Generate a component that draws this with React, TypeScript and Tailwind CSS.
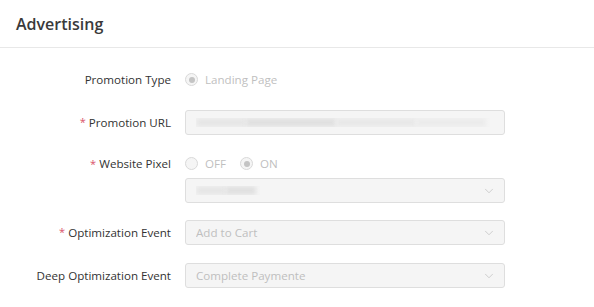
import { ChevronDown } from "lucide-react";

const Label = ({ text, required }: { text: string; required?: boolean }) => (
  <div className="w-[171px] shrink-0 h-[24px] flex items-center justify-end text-[11.6px] text-[#333]">
    {required && <span className="text-[#d9536b] mr-[3px] text-[11px]">*</span>}
    {text}
  </div>
);

const Radio = ({ label, checked }: { label: string; checked?: boolean }) => (
  <span className="flex items-center mr-[14px]">
    <span className="w-[13px] h-[13px] rounded-full border border-[#d9d9d9] bg-[#f5f5f5] flex items-center justify-center mr-[7px]">
      {checked && <span className="w-[6px] h-[6px] rounded-full bg-[#c4c4c4]" />}
    </span>
    <span className="text-[11.6px] text-[#bfbfbf]">{label}</span>
  </span>
);

const Blur = ({ w, shade }: { w: number; shade: string }) => (
  <span className={`h-[9px] blur-[2px] ${shade}`} style={{ width: w }} />
);

const Box = ({ children, select }: { children?: React.ReactNode; select?: boolean }) => (
  <div className="w-[320px] h-[25px] rounded-[3px] border border-[#dedede] bg-[#f5f5f5] flex items-center px-[10px] text-[11.6px] text-[#bfbfbf]">
    <div className="flex-1 flex items-center overflow-hidden">{children}</div>
    {select && <ChevronDown size={14} strokeWidth={1.2} className="text-[#bdbdbd] mr-[-2px]" />}
  </div>
);

export default function App() {
  return (
    <div className="w-[594px] h-[307px] bg-white" style={{ fontFamily: '"Open Sans", "Noto Sans", sans-serif' }}>
      <div className="h-[48px] border-b border-[#e8e8e8] flex items-center px-[16px]">
        <h1 className="text-[16px] font-semibold text-[#3a3a3a]">Advertising</h1>
      </div>

      <div className="pt-[20px] flex flex-col">
        <div className="flex items-center gap-[14px]">
          <Label text="Promotion Type" />
          <Radio label="Landing Page" checked />
        </div>

        <div className="flex items-center gap-[14px] mt-[18px]">
          <Label text="Promotion URL" required />
          <Box>
            <Blur w={50} shade="bg-[#e6e6e6]" />
            <Blur w={90} shade="bg-[#e0e0e0]" />
            <Blur w={80} shade="bg-[#e8e8e8]" />
            <Blur w={70} shade="bg-[#ebebeb]" />
          </Box>
        </div>

        <div className="flex items-center gap-[14px] mt-[17px]">
          <Label text="Website Pixel" required />
          <div className="flex items-center">
            <Radio label="OFF" />
            <Radio label="ON" checked />
          </div>
        </div>

        <div className="flex items-center gap-[14px] mt-[2px]">
          <div className="w-[171px] shrink-0" />
          <Box select>
            <Blur w={30} shade="bg-[#e6e6e6]" />
            <Blur w={30} shade="bg-[#e0e0e0]" />
          </Box>
        </div>

        <div className="flex items-center gap-[14px] mt-[17px]">
          <Label text="Optimization Event" required />
          <Box select>Add to Cart</Box>
        </div>

        <div className="flex items-center gap-[14px] mt-[18px]">
          <Label text="Deep Optimization Event" />
          <Box select>Complete Paymente</Box>
        </div>
      </div>
    </div>
  );
}
